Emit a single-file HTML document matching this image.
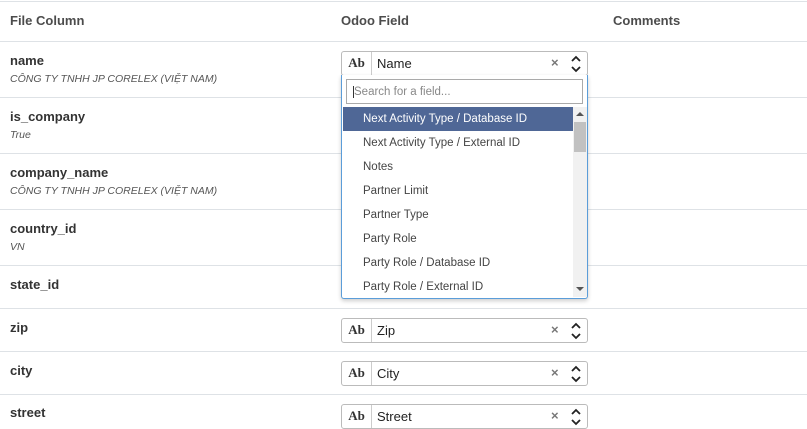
<!DOCTYPE html>
<html><head><meta charset="utf-8"><style>
*{box-sizing:border-box;margin:0;padding:0}
body{width:807px;height:418px;overflow:hidden;background:#fff;font-family:"Liberation Sans","DejaVu Sans",sans-serif;color:#4c4c4c;position:relative}
.a{position:absolute}
.line{position:absolute;left:0;width:807px;height:1px;background:#dee2e6}
.h{font-weight:bold;font-size:13px;color:#4c4c4c;top:13px}
.lbl{left:10px;font-size:13px;color:#333;font-weight:bold}
.sub{left:10px;font-size:10.5px;font-style:italic;color:#555}
.sel{position:absolute;left:341px;width:247px;height:25px;border:1px solid #bbb;border-radius:3px;background:#fff}
.sel .ab{position:absolute;left:0;top:0;width:30px;height:23px;border-right:1px solid #ccc;font-family:"Liberation Serif",serif;font-weight:bold;font-size:13px;color:#333;text-align:center;line-height:22px}
.sel .t{position:absolute;left:35px;top:4px;font-size:13px;color:#222}
.sel .x{position:absolute;left:209px;top:3px;font-size:13px;color:#777;font-weight:bold}
.sel .ud{position:absolute;left:228px;top:2px;width:12px;height:20px}
.item{position:absolute;left:1px;width:230px;height:24px;font-size:11.5px;color:#444;padding-left:20px;line-height:24px}
</style></head><body>
<div class="line" style="top:1px"></div>
<div class="a h" style="left:10px">File Column</div>
<div class="a h" style="left:341px">Odoo Field</div>
<div class="a h" style="left:613px">Comments</div>
<div class="line" style="top:41px"></div>
<div class="a lbl" style="top:53px">name</div><div class="a sub" style="top:73px">CÔNG TY TNHH JP CORELEX (VIỆT NAM)</div>
<div class="line" style="top:97px"></div>
<div class="a lbl" style="top:109px">is_company</div><div class="a sub" style="top:129px">True</div>
<div class="line" style="top:153px"></div>
<div class="a lbl" style="top:165px">company_name</div><div class="a sub" style="top:185px">CÔNG TY TNHH JP CORELEX (VIỆT NAM)</div>
<div class="line" style="top:209px"></div>
<div class="a lbl" style="top:221px">country_id</div><div class="a sub" style="top:241px">VN</div>
<div class="line" style="top:265px"></div>
<div class="a lbl" style="top:277px">state_id</div>
<div class="line" style="top:308px"></div>
<div class="a lbl" style="top:320px">zip</div>
<div class="line" style="top:351px"></div>
<div class="a lbl" style="top:363px">city</div>
<div class="line" style="top:394px"></div>
<div class="a lbl" style="top:405px">street</div>

<div class="sel" style="top:51px"><div class="ab">Ab</div><div class="t">Name</div><div class="x">×</div><svg class="ud" viewBox="0 0 12 20"><path d="M2 7l4-4 4 4M2 13l4 4 4-4" stroke="#222" stroke-width="1.8" fill="none"/></svg></div>
<div class="sel" style="top:318px"><div class="ab">Ab</div><div class="t">Zip</div><div class="x">×</div><svg class="ud" viewBox="0 0 12 20"><path d="M2 7l4-4 4 4M2 13l4 4 4-4" stroke="#222" stroke-width="1.8" fill="none"/></svg></div>
<div class="sel" style="top:361px"><div class="ab">Ab</div><div class="t">City</div><div class="x">×</div><svg class="ud" viewBox="0 0 12 20"><path d="M2 7l4-4 4 4M2 13l4 4 4-4" stroke="#222" stroke-width="1.8" fill="none"/></svg></div>
<div class="sel" style="top:404px"><div class="ab">Ab</div><div class="t">Street</div><div class="x">×</div><svg class="ud" viewBox="0 0 12 20"><path d="M2 7l4-4 4 4M2 13l4 4 4-4" stroke="#222" stroke-width="1.8" fill="none"/></svg></div>

<div class="a" style="left:341px;top:75px;width:247px;height:224px;border:1px solid #5b9dd9;border-top:none;border-radius:0 0 3px 3px;background:#fff;box-shadow:0 2px 4px rgba(0,0,0,.2)">
 <div class="a" style="left:4px;top:4px;width:237px;height:25px;border:1px solid #aaa;font-size:11.5px;color:#888;padding:5px 6px;line-height:14px"><span style="border-left:1px solid #333;padding-left:0">Search for a field...</span></div>
 <div class="item" style="top:32px;background:#4f6796;color:#fff">Next Activity Type / Database ID</div>
 <div class="item" style="top:56px">Next Activity Type / External ID</div>
 <div class="item" style="top:80px">Notes</div>
 <div class="item" style="top:104px">Partner Limit</div>
 <div class="item" style="top:128px">Partner Type</div>
 <div class="item" style="top:152px">Party Role</div>
 <div class="item" style="top:176px">Party Role / Database ID</div>
 <div class="item" style="top:200px">Party Role / External ID</div>
 <div class="a" style="left:231px;top:32px;width:14px;height:190px;background:#f1f1f1">
  <div class="a" style="left:3px;top:5px;width:0;height:0;border-left:4px solid transparent;border-right:4px solid transparent;border-bottom:4px solid #555"></div>
  <div class="a" style="left:1px;top:15px;width:12px;height:30px;background:#c1c1c1"></div>
  <div class="a" style="left:3px;top:180px;width:0;height:0;border-left:4px solid transparent;border-right:4px solid transparent;border-top:4px solid #555"></div>
 </div>
</div>
</body></html>
